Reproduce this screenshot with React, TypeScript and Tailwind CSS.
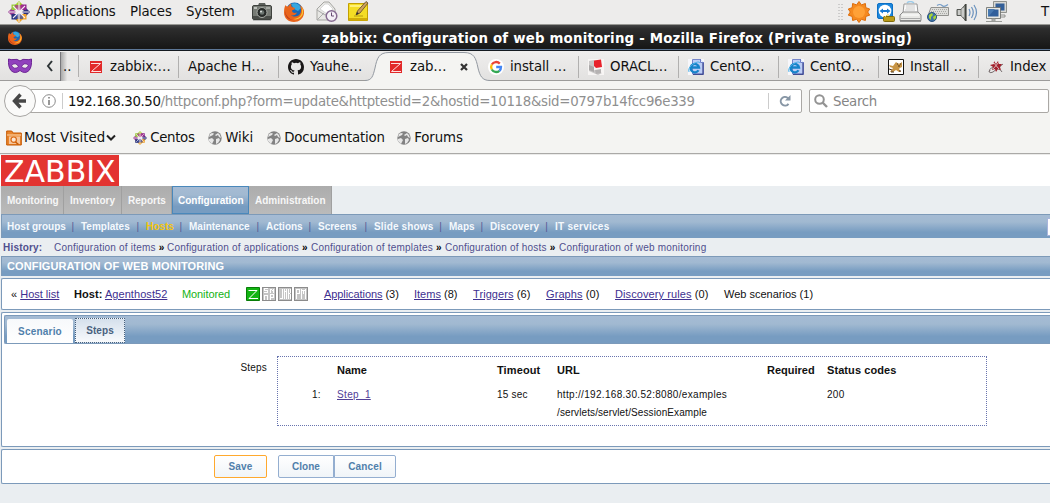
import React from "react";

type P = { className?: string };

const Centos = ({ className = "w-[22px] h-[22px]" }: P) => (
  <svg viewBox="0 0 22 22" className={className}>
    <path d="M11 0l4 4-4 4-4-4z" fill="#a6cf2e" />
    <path d="M11 14l4 4-4 4-4-4z" fill="#e9a127" />
    <path d="M0 11l4-4 4 4-4 4z" fill="#9c3f97" />
    <path d="M22 11l-4-4-4 4 4 4z" fill="#2d2f79" />
    <path d="M3.500 3.500H9v5.500H3.500z" fill="#9acb3c" />
    <path d="M13 3.500h5.500V9H13z" fill="#93268f" />
    <path d="M3.500 13H9v5.500H3.500z" fill="#28307b" />
    <path d="M13 13h5.500v5.500H13z" fill="#f0a22b" />
    <path d="M7 4h8v3l-4 4-4-4z" fill="#a8348f" opacity=".75" />
    <path d="M7 18h8v-3l-4-4-4 4z" fill="#394ca0" opacity=".75" />
    <path d="M5 5l12 12M17 5L5 17M1 11h20M11 1v20" stroke="#f5edf2" strokeWidth="1.100" fill="none" />
  </svg>
);

const Firefox = ({ className = "w-5 h-5" }: P) => (
  <svg viewBox="0 0 20 20" className={className}>
    <circle cx="10.500" cy="9" r="8.500" fill="#1768b5" />
    <path d="M7 2c4-2 9 0 10 4l-3 3-4-2z" fill="#36a7df" />
    <path d="M1.500 3C2 4 3 4.500 4 4.500 5 3 6 2 7.500 1.500 7 3 7 4 8 5l3 1c0 1.500-2 2-3 2.500 0 2 2 3 5 2-1 2.500-4 3.500-6 2.500 3 3 8 1.500 9.500-2 1-3 .5-6-1-8C19 5 20.500 8 20 11.500 19 17 15 20 10 20 4 20 0 16 0 10.500 0 7 .5 5 1.500 3z" fill="#e8641b" />
    <path d="M17 4c3 4 3 8 0 11-2 2-5 3-8 2 6 0 9-4 9-8 0-2 0-3-1-5z" fill="#fbc531" />
    <path d="M1 9c1 5 4 8 8 9-5 0-8-4-8-9z" fill="#b9311a" />
  </svg>
);

const Camera = () => (
  <svg viewBox="0 0 20 20" className="w-5 h-5">
    <path d="M6 3.500l1-2.500h6l1 2.500z" fill="#5c605b" />
    <rect x=".5" y="3.500" width="19" height="14" rx="1.500" fill="#777b75" stroke="#3e413d" />
    <path d="M1 14h18v3H1z" fill="#4a4d49" />
    <rect x="2" y="5" width="3" height="2" fill="#bfc2bd" />
    <rect x="14" y="5" width="4" height="2" fill="#a4a8a2" />
    <circle cx="10" cy="10.500" r="5" fill="#282b29" stroke="#a9ada7" />
    <circle cx="10" cy="10.500" r="2.300" fill="#6b7470" />
    <circle cx="9" cy="9.500" r="1" fill="#dde2df" />
    <path d="M1 18.500h18" stroke="#bbb" />
  </svg>
);

const MailClock = () => (
  <svg viewBox="0 0 22 22" className="w-[22px] h-[22px]">
    <path d="M1 8l7-7h5l6 7v11H1z" fill="#e8e8e5" stroke="#a6a6a2" />
    <path d="M4 8l5-5h3l5 5-6 5z" fill="#fff" stroke="#ccc" strokeWidth=".7" />
    <path d="M1 19l7-7M1 9l8 5 4-2" stroke="#aaa" fill="none" />
    <circle cx="15.500" cy="15" r="5.300" fill="#f4f0f6" stroke="#866b91" strokeWidth="1.500" />
    <path d="M15.500 11.500V15H18" stroke="#664b70" fill="none" />
  </svg>
);

const Note = () => (
  <svg viewBox="0 0 22 22" className="w-[22px] h-[22px]">
    <path d="M1.500 2.500h19v17h-19z" fill="#f4dd25" stroke="#c3a000" />
    <path d="M2 17h18v2.500H2z" fill="#d1ac0a" />
    <path d="M3 4h14v2H3z" fill="#fff178" />
    <path d="M9 14l1.500-4L19 .5l2 1.500-8 10z" fill="#cda25d" stroke="#59452b" strokeWidth=".8" />
    <path d="M9 14l1-3 2 1.500z" fill="#2b2b2b" />
    <path d="M7 15h9" stroke="#b69b10" />
  </svg>
);

const Sun = () => (
  <svg viewBox="0 0 22 22" className="w-[22px] h-[22px]">
    <path d="M11 0.500l2.400 3.400 4-1.400.4 4.200 3.900 1.300-2 3 2 3.200-3.900 1.200-.4 4.100-4-1.200L11 21.500l-2.400-3.200-4 1.200-.4-4.100-3.900-1.200 2-3.200-2-3 3.900-1.300.4-4.200 4 1.400z" fill="#f58a20" stroke="#dd6d0b" />
    <circle cx="11" cy="11" r="6" fill="#ffa137" />
  </svg>
);

const TeamViewer = () => (
  <svg viewBox="0 0 20 22" className="w-5 h-[22px]">
    <rect x="1.500" y="2.500" width="15" height="15" rx="1.500" fill="#1c87dd" stroke="#0b6fc4" />
    <circle cx="9" cy="10" r="6.300" fill="#fff" />
    <path d="M3.500 10l3.500-2.500V9h4V7.500l3.500 2.500-3.500 2.500V11H7v1.500z" fill="#1679d3" />
    <rect x="7.500" y="15.500" width="11" height="5" rx="1" fill="#b99b19" stroke="#806b0b" />
    <path d="M9 16l2-2h2" stroke="#e4cf62" fill="none" />
  </svg>
);

const Printer = () => (
  <svg viewBox="0 0 23 22" className="w-[23px] h-[22px]">
    <path d="M8 2q3-3 7 0" stroke="#9dcbe9" fill="none" strokeWidth="1.500" />
    <path d="M5 3h13l1 9H4z" fill="#fafafa" stroke="#999" />
    <path d="M7 5h9M7 7h9M6 9h10" stroke="#ccc" />
    <path d="M4 11L1 14v5.500h21V14l-3-3z" fill="#e8e8e5" stroke="#888" />
    <path d="M3 14h17" stroke="#fff" />
    <path d="M2 17.500h19" stroke="#aaa" />
    <path d="M1 20.500h21" stroke="#999" />
  </svg>
);

const Keyboard = () => (
  <svg viewBox="0 0 22 20" className="w-[22px] h-5">
    <path d="M10 3.500q3-2 5 0t6-1" stroke="#769dc7" strokeWidth="1.200" fill="none" />
    <path d="M4 5.500h17.500v8H1z" fill="#ddddda" stroke="#91918e" />
    <path d="M5 7.500h15M4 9.500h16M3 11.500h17" stroke="#a8a8a5" strokeDasharray="1 1" />
    <circle cx="5" cy="15" r="4.500" fill="#3f72a8" stroke="#29527e" />
    <path d="M2 13l3-2 1 2-2 2v3l-2-2zM6 15l3-2v3l-2 2z" fill="#a4d335" />
  </svg>
);

const Speaker = () => (
  <svg viewBox="0 0 22 20" className="w-[22px] h-5">
    <path d="M1 7.500h4l5-5.500v17l-5-5.500H1z" fill="#a6a8a3" stroke="#555753" />
    <path d="M3 8v5M7 6v9" stroke="#eee" />
    <path d="M9.500 2v17" stroke="#42443f" strokeWidth="1.500" />
    <path d="M13 7q2 3.500 0 7M15.500 5q3.500 5.500 0 11M18 3q5 7.500 0 15" stroke="#6991bd" strokeWidth="1.200" fill="none" />
  </svg>
);

const Screens = () => (
  <svg viewBox="0 0 22 22" className="w-[22px] h-[22px]">
    <path d="M9.500 1.500h11v9h-11z" fill="#335f98" stroke="#d8d8d4" strokeWidth="2" />
    <path d="M8.500.5h13v11h-13zM11 14h9v2h-9z" fill="none" stroke="#7b7d79" strokeWidth=".8" />
    <path d="M2.500 7.500h12v9h-12z" fill="#315f9b" stroke="#e7e7e3" strokeWidth="2" />
    <path d="M1.500 6.500h14v11h-14z" fill="none" stroke="#666865" strokeWidth=".8" />
    <path d="M3 16l7-8h-7z" fill="#4778b0" />
    <path d="M7 18h3v2H7zM1 20.500h16" stroke="#999b97" fill="#bbb" />
  </svg>
);

const Mask = () => (
  <svg viewBox="0 0 24 16" className="w-6 h-4">
    <path d="M.5 1Q3 2 6 1.500 9 .5 12 3q3-2.500 6-1.500 3 .5 5.500-.5Q24 9 21 12.500 17 16.500 12 12.500 7 16.500 3 12.500 0 9 .5 1z" fill="#9141bd" stroke="#6c2494" />
    <path d="M3.500 7.500q4-4 7 1-4 4-7-1zM20.500 7.500q-4-4-7 1 4 4 7-1z" fill="#eeeceb" stroke="#64208a" strokeWidth=".8" />
  </svg>
);

const ZTab = () => (
  <svg viewBox="0 0 16 16" className="w-4 h-4">
    <rect x="2" y="2" width="12" height="12" fill="#e22a2a" />
    <path d="M3 4.500h9.500L3.500 12.500H13" stroke="#ffe1e1" fill="none" />
  </svg>
);

const Github = () => (
  <svg viewBox="0 0 16 16" className="w-4 h-4">
    <path d="M8 0C3.580 0 0 3.580 0 8c0 3.540 2.290 6.530 5.470 7.590.4.070.55-.17.55-.38 0-.19-.01-.82-.01-1.490-2.010.37-2.530-.49-2.690-.94-.09-.23-.48-.94-.82-1.130-.28-.15-.68-.52-.01-.53.63-.01 1.080.58 1.230.82.72 1.210 1.870.87 2.330.66.07-.52.28-.87.51-1.070-1.780-.2-3.640-.89-3.640-3.950 0-.87.31-1.590.82-2.150-.08-.2-.36-1.020.08-2.120 0 0 .67-.21 2.200.82a7.600 7.600 0 0 1 4 0c1.530-1.040 2.200-.82 2.200-.82.44 1.100.16 1.920.08 2.120.51.56.82 1.270.82 2.150 0 3.070-1.870 3.750-3.650 3.950.29.25.54.73.54 1.480 0 1.070-.01 1.930-.01 2.200 0 .21.15.46.55.38A8 8 0 0 0 16 8c0-4.420-3.580-8-8-8z" fill="#191717" />
  </svg>
);

const Google = () => (
  <svg viewBox="0 0 16 16" className="w-4 h-4">
    <circle cx="8" cy="8" r="8" fill="#fff" />
    <g fill="none" strokeWidth="2.300">
      <path d="M11.800 4.600A5 5 0 0 0 3.800 5.500" stroke="#ea4335" />
      <path d="M3.800 5.500a5 5 0 0 0 0 5" stroke="#fbbc05" />
      <path d="M3.800 10.500a5 5 0 0 0 7.600 1.300" stroke="#34a853" />
      <path d="M11.400 11.800A5 5 0 0 0 13 8H8.200" stroke="#4285f4" />
    </g>
  </svg>
);

const Oracle = () => (
  <svg viewBox="0 0 16 16" className="w-4 h-4">
    <path d="M0 0h16v16H0z" fill="#f7f5f4" />
    <path d="M1 2l5-1v10l8 3-4 2-9-4z" fill="#c9c7c7" />
    <path d="M1 6l5 2v5l-5-2z" fill="#aaa8a8" />
    <path d="M6 1.500l7-1 1 7.500-6 1-2-2z" fill="#e8222b" />
    <path d="M7 11l6-1v4l-5 1z" fill="#b5b2b2" />
  </svg>
);

const Explorer = () => (
  <svg viewBox="0 0 16 16" className="w-4 h-4">
    <path d="M0 0h16v16H0z" fill="#f7f7fb" />
    <path d="M4.500.5h8l3 3V15h-11z" fill="#bccdf6" stroke="#7585c9" />
    <path d="M15 4v11.500H5" stroke="#414b91" fill="none" strokeWidth="1.300" />
    <path d="M12.500 0v3.500H16" fill="#e8efff" stroke="#6c7ec6" />
    <path d="M10.500 11.200A4.200 4.200 0 1 1 11 8.500H3.500" fill="none" stroke="#1683c9" strokeWidth="2.300" />
    <path d="M1 13Q-.5 9 5 5q6-3.500 7-1" fill="none" stroke="#4eb2e8" />
  </svg>
);

const Tomcat = () => (
  <svg viewBox="0 0 16 16" className="w-4 h-4">
    <path d="M.5.5h15v15H.5z" fill="#fff" stroke="#111" />
    <path d="M8 3l2 1.500 2 .1L14 3v5l-2 1-1 1 2 3h-2l-3-2-3 2H2l3-4-3-1-1-2 4 1z" fill="#c89545" />
    <path d="M9 5h1M12 5h1M10 7h2M1 10l3 1M3 13h3M11 12h2" stroke="#4c321a" />
  </svg>
);

const Jetty = () => (
  <svg viewBox="0 0 16 16" className="w-4 h-4">
    <path d="M2 11Q0 15 5 13L15 5M1 13Q2 7 8 9T14 13" fill="none" stroke="#796f70" />
    <path d="M6 2l2 3 2-3 1 3h3l-2 3 1 3-3-1-2 3-1-3-3 1 1-3-3-2 4-1z" fill="#a3202c" />
    <path d="M5 3l6 7M11 3L5 10" stroke="#d9b8ba" />
  </svg>
);

const MostVisited = () => (
  <svg viewBox="0 0 16 16" className="w-4 h-4 shrink-0">
    <path d="M.7 1h5l1.500 2h8.100v12H.7z" fill="#e9852d" stroke="#c65800" />
    <path d="M1 5h14" stroke="#fbd8b0" />
    <rect x="3" y="6.500" width="11" height="7.500" fill="#f6c59a" />
    <circle cx="7.700" cy="9.700" r="2.700" fill="#fce6d3" stroke="#d96912" strokeWidth="1.200" />
    <path d="M9.500 12l3 2.500" stroke="#c95900" strokeWidth="1.500" />
  </svg>
);

const Globe = () => (
  <svg viewBox="0 0 14 14" className="w-3.5 h-3.5 shrink-0">
    <circle cx="7" cy="7" r="6.700" fill="#828282" />
    <path d="M2 3l2-1 2 .5L5 4 3 5 1 6zM7 4l3-2 2 2 1 3-2-1-1-2-2 1zM1 8l3-1 2 2-1 2-1 2-3-3zM8 8l3-1 1 2-2 3-2 1z" fill="#e7e7e7" />
  </svg>
);

type TabProps = { icon?: React.ReactNode; text: string; active?: boolean; divider?: boolean };
const Tab = ({ icon, text, active, divider = true }: TabProps) => (
  <div className="relative flex h-[30px] w-[100px] shrink-0 items-center pl-[9px]">
    {active && (
      <svg viewBox="0 0 126 30" className="absolute left-[-14px] top-0 h-[30px] w-[126px]">
        <path d="M0 29.500C7 29.500 8 25 10 17 12 7 14 1.500 24 1.500H99C109 1.500 111 7 113 17 115 25 117 29.500 125 29.500V30H0z" fill="#f4f4f2" />
        <path d="M0 29.500C7 29.500 8 25 10 17 12 7 14 1.500 24 1.500H99C109 1.500 111 7 113 17 115 25 117 29.500 125 29.500" fill="none" stroke="#9399a1" />
      </svg>
    )}
    {icon && <span className="relative mr-1.5 flex w-4 items-center pt-px">{icon}</span>}
    <span className="relative pt-0.5 tracking-[-0.1px]">{text}</span>
    {active && (
      <svg viewBox="0 0 8 8" className="absolute left-[81px] top-3 h-2 w-2">
        <path d="M1 1l6 6M7 1L1 7" stroke="#333" strokeWidth="2.200" />
      </svg>
    )}
    {divider && <span className="absolute right-0 top-[5px] h-[22px] w-px bg-[#b1b0af]" />}
  </div>
);

const Bar = "bg-linear-to-b from-[#a5bbd4] via-[#a1b9d1] via-30% to-[#779cc1] to-75%";

const mainMenu = [
  { t: "Monitoring", c: "w-[63px]" },
  { t: "Inventory", c: "w-[58px]" },
  { t: "Reports", c: "w-[50px]" },
];
const subMenu = [
  { t: "Host groups", c: "w-[74px]" },
  { t: "Templates", c: "w-[65px]" },
  { t: "Hosts", c: "w-[43px] text-[#f5c60a]" },
  { t: "Maintenance", c: "w-[77px]" },
  { t: "Actions", c: "w-[52px]" },
  { t: "Screens", c: "w-[56px]" },
  { t: "Slide shows", c: "w-[75px] tracking-[0.15px]" },
  { t: "Maps", c: "w-[41px]" },
  { t: "Discovery", c: "w-[65px] tracking-[0.15px]" },
  { t: "IT services", c: "w-[80px] tracking-[0.25px]" },
];
const history = [
  { t: "items", c: "w-[113px]" },
  { t: "applications", c: "w-[144px]" },
  { t: "templates", c: "w-[134px]" },
  { t: "hosts", c: "w-[114px]" },
  { t: "web monitoring", c: "w-[160px]" },
];
const links = [
  { t: "Applications", n: 3, c: "w-[90px] tracking-[-0.07px]" },
  { t: "Items", n: 8, c: "w-[59px]" },
  { t: "Triggers", n: 6, c: "w-[73px] tracking-[0.08px]" },
  { t: "Graphs", n: 0, c: "w-[69px] tracking-[0.08px]" },
  { t: "Discovery rules", n: 0, c: "w-[109px] tracking-[0.1px]" },
];

const Badge = ({ d }: { d: string }) => (
  <svg viewBox="0 0 14 14" className="h-3.5 w-3.5" shapeRendering="crispEdges">
    <path d="M.5.5h13v13H.5z" fill="#c5c5c5" stroke="#8c8c8c" />
    <path d={d} fill="none" stroke="#fff" />
  </svg>
);

export default function App() {
  return (
    <div className="flex h-[503px] w-[1050px] flex-col overflow-hidden whitespace-nowrap bg-[#eaeef1] font-['DejaVu_Sans',sans-serif] text-[13.33px] leading-4 text-[#111]">
      <div className="flex h-6 shrink-0 items-center bg-[#edeceb] pl-2">
        <Centos />
        <span className="ml-1.5 w-[94px] tracking-[-0.15px]">Applications</span>
        <span className="w-14 tracking-[-0.1px]">Places</span>
        <span className="w-[66px] tracking-[-0.2px]">System</span>
        <span className="w-8"><Camera /></span>
        <span className="w-8"><Firefox /></span>
        <span className="w-[31px]"><MailClock /></span>
        <Note />
        <svg viewBox="0 0 6 18" className="ml-[469px] h-[18px] w-1.5">
          <path d="M1 1v17M4 1v17" stroke="#aaa" strokeDasharray="1 2" />
        </svg>
        <span className="ml-1 w-7"><Sun /></span>
        <span className="w-[23px]"><TeamViewer /></span>
        <span className="w-7"><Printer /></span>
        <span className="w-[29px]"><Keyboard /></span>
        <span className="w-[29px]"><Speaker /></span>
        <span className="w-[56px]"><Screens /></span>
        <span>T</span>
      </div>

      <div className="flex h-[27px] shrink-0 items-center border-b border-t border-b-[#151a20] border-t-[#989894] bg-linear-to-b from-[#444] via-[#2d2d2d] via-15% to-[#181818] to-90% pl-2 shadow-[inset_0_-1px_0_#5d7797]">
        <Firefox className="h-3.5 w-3.5" />
        <span className="ml-[300px] pt-0.5 font-bold tracking-[0.2px] text-white">zabbix: Configuration of web monitoring - Mozilla Firefox (Private Browsing)</span>
      </div>

      <div className="flex h-[30px] shrink-0 items-center bg-linear-to-b from-[#efeeed] to-[#e2e1e0] shadow-[inset_0_-1px_0_#9c9b9a]">
        <span className="ml-2 w-[38px] shrink-0"><Mask /></span>
        <svg viewBox="0 0 8 12" className="h-3 w-2 shrink-0"><path d="M6 1L2 6l4 5" fill="none" stroke="#2e3436" strokeWidth="2" /></svg>
        <span className="ml-1.5 flex h-[29px] w-[19px] shrink-0 items-center border-l border-[#77777b] bg-linear-to-r from-[#aaa] via-[#e9e8e7] via-35% to-[#e9e8e7] pl-0.5 pt-0.5">..</span>
        <span className="-ml-px h-[22px] w-px shrink-0 bg-[#b1b0af]" />
        <Tab icon={<ZTab />} text="zabbix:…" />
        <Tab text="Apache H…" />
        <Tab icon={<Github />} text="Yauhe…" divider={false} />
        <Tab icon={<ZTab />} text="zab…" active divider={false} />
        <Tab icon={<Google />} text="install …" />
        <Tab icon={<Oracle />} text="ORACL…" />
        <Tab icon={<Explorer />} text="CentO…" />
        <Tab icon={<Explorer />} text="CentO…" />
        <Tab icon={<Tomcat />} text="Install …" />
        <Tab icon={<Jetty />} text="Index" divider={false} />
      </div>

      <div className="flex h-10 shrink-0 items-center bg-[#f4f4f2]">
        <svg viewBox="0 0 34 34" className="z-10 ml-[3px] h-[34px] w-[34px] shrink-0">
          <circle cx="17" cy="17" r="15.500" fill="#fafaf9" stroke="#a7a5a3" />
          <path d="M23 17H12M17.500 10.500L11.500 17l6 6.500" fill="none" stroke="#474747" strokeWidth="3.400" />
        </svg>
        <div className="-ml-3 flex h-6 w-[777px] shrink-0 items-center rounded-r-[2px] border border-[#aaa8a5] bg-white pl-4">
          <svg viewBox="0 0 14 14" className="h-3.5 w-3.5 shrink-0">
            <circle cx="7" cy="7" r="6.300" fill="none" stroke="#8a8a8a" />
            <path d="M7 6v5M7 3v1.600" stroke="#777" strokeWidth="1.500" />
          </svg>
          <span className="ml-1.5 mr-[5px] h-4 w-px shrink-0 bg-[#ccc]" />
          <span className="w-[700px] shrink-0 pt-px tracking-[-0.295px] text-[#8f8f8f]"><span className="tracking-[-0.38px] text-[#111]">192.168.30.50</span>/httpconf.php?form=update&amp;httptestid=2&amp;hostid=10118&amp;sid=0797b14fcc96e339</span>
          <span className="h-4 w-px shrink-0 bg-[#ccc]" />
          <svg viewBox="0 0 12 12" className="ml-2.5 h-3 w-3 shrink-0">
            <path d="M9.500 8.800A4.300 4.300 0 1 1 8.500 2.700L10 4.500" fill="none" stroke="#8796a5" strokeWidth="2" />
            <path d="M11.500 0v5.500H6z" fill="#8796a5" />
          </svg>
        </div>
        <div className="ml-[7px] flex h-6 w-60 items-center rounded-[2px] border border-[#aaa8a5] bg-white pl-1">
          <svg viewBox="0 0 14 14" className="h-3.5 w-3.5"><circle cx="5.500" cy="5.500" r="4.300" fill="none" stroke="#939393" strokeWidth="2" /><path d="M8.500 8.500l4.500 4.500" stroke="#939393" strokeWidth="2.400" /></svg>
          <span className="ml-[5px] pt-px tracking-[-0.3px] text-[#858585]">Search</span>
        </div>
      </div>

      <div className="flex h-8 shrink-0 items-center bg-[#f4f4f2] pl-1.5 pt-px">
        <MostVisited />
        <span className="ml-0.5">Most Visited</span>
        <svg viewBox="0 0 10 8" className="ml-px mr-[17px] h-2 w-2.5"><path d="M1 1.500l4 4 4-4" fill="none" stroke="#222" strokeWidth="2" /></svg>
        <Centos className="h-3.5 w-3.5" />
        <span className="ml-[3px] w-[58px] tracking-[-0.3px]">Centos</span>
        <Globe /><span className="ml-[3px] w-[42px]">Wiki</span>
        <Globe /><span className="ml-[3px] w-[113px] tracking-[-0.15px]">Documentation</span>
        <Globe /><span className="ml-[3px] tracking-[-0.1px]">Forums</span>
      </div>
      <div className="h-0.5 shrink-0 border-t border-[#aaa9a7] bg-[#ebebea]" />

      <div className="flex grow flex-col font-['Liberation_Sans',sans-serif] text-[10px]">
        <div className="flex h-[31px] shrink-0 bg-white pl-px">
          <div className="h-[31px] w-[118px] bg-[#e33431] pl-[3px] font-['DejaVu_Sans',sans-serif] text-[30px] leading-[33px] text-white">ZABBIX</div>
        </div>
        <div className="flex h-7 shrink-0 pl-px font-bold leading-[29px] text-[#f7f7f7]">
          {mainMenu.map((m) => (
            <span key={m.t} className={`${m.c} border-r border-[#a0a0a0] bg-linear-to-b from-[#acacac] to-[#bababa] pl-1.5`}>{m.t}</span>
          ))}
          <span className={`${Bar} w-[77px] border border-[#4a88bb] pl-[5px] leading-[27px] text-white`}>Configuration</span>
          <span className="w-[83px] border-r border-[#a0a0a0] bg-linear-to-b from-[#acacac] to-[#bababa] pl-1.5">Administration</span>
        </div>

        <div className={`${Bar} ml-px flex h-6 shrink-0 items-center border-l border-t border-[#7d9ab8] pl-[5px] font-bold text-[#f5f9fd]`}>
          {subMenu.map((m, i) => (
            <span key={m.t} className={`${m.c} flex shrink-0 justify-between`}>
              {m.t}
              {i < subMenu.length - 1 && <span className="mr-[7px] font-normal text-[#595994]">|</span>}
            </span>
          ))}
          <span className="ml-auto h-[18px] w-[3px] border border-r-0 border-[#a8b5dc] bg-white" />
        </div>

        <div className="flex h-[18px] shrink-0 items-center pl-[3px] pt-px tracking-[0.2px] text-[#504e8e]">
          <span className="w-[51px] font-bold">History:</span>
          {history.map((h, i) => (
            <span key={h.t} className={h.c}>
              Configuration of {h.t}
              {i < history.length - 1 && <b className="text-black"> »</b>}
            </span>
          ))}
        </div>
        <div className={`${Bar} ml-px h-5 shrink-0 border-l border-t border-[#7d9ab8] pl-[5px] text-[11px] font-bold leading-[19px] tracking-[0.12px] text-white`}>CONFIGURATION OF WEB MONITORING</div>

        <div className="ml-px mt-0.5 flex h-8 shrink-0 items-center rounded-l-[2px] border border-r-0 border-[#7c9aba] bg-white pl-[9px] text-[11px] text-[#111]">
          <span className="w-[63px]">« <a className="text-[#403090] underline">Host list</a></span>
          <span className="w-[108px] tracking-[0.06px]"><b>Host:</b> <a className="text-[#403090] underline">Agenthost52</a></span>
          <span className="w-16 tracking-[-0.1px] text-[#14b314]">Monitored</span>
          <span className="flex w-[78px] gap-0.5">
            <svg viewBox="0 0 14 14" className="h-3.5 w-3.5"><path d="M.5.5h13v13H.5z" fill="#12b412" stroke="#087d08" /><path d="M2.500 3.500h8.500L3 11.500h9" fill="none" stroke="#fff" /></svg>
            <Badge d="M6 1.500H2.500v2H5.500v2H2M8.500 6V1.500M9 2.500h1M10 3.500h1M11.500 6V1.500M2.500 12.500V7.500M3 8.500h2M5.500 12.500V7.500M8.500 12.500V7.500h3v2.500h-3" />
            <Badge d="M4.500 2v9.500h-3M6.500 12V2M7 4.500h1M8.500 2v10M10.500 2v10M11 6.500h1M12.500 2v4M12.500 7v5" />
            <Badge d="M2.500 12V2.500h3v4h-3M7.500 12V2M8 3.500h1M9.500 3v4M10 3.500h1M11.500 2v10" />
          </span>
          {links.map((l) => (
            <span key={l.t} className={l.c}><a className="text-[#403090] underline">{l.t}</a> ({l.n})</span>
          ))}
          <span>Web scenarios (1)</span>
        </div>

        <div className="ml-px mt-0.5 h-[135px] shrink-0 rounded-l-[2px] border border-r-0 border-[#7c9aba] bg-white pl-0.5 pt-0.5">
          <div className={`${Bar} flex h-[29px] items-end gap-0.5 rounded-l-[2px] border border-r-0 border-[#7c9aba] pl-0.5 font-bold`}>
            <span className="h-6 w-[66px] rounded-t-[2px] bg-linear-to-b from-[#f7f9fb] to-white text-center leading-[25px] tracking-[0.2px] text-[#507fab]">Scenario</span>
            <span className="h-[25px] w-[50px] border border-dotted border-[#47607c] bg-linear-to-b from-[#d5e0ec] to-[#f8fafc] text-center leading-[24px] tracking-[0.1px] text-[#48617e]">Steps</span>
          </div>
          <div className="mt-3 flex text-[#111]">
            <span className="w-[263px] pt-1 text-right tracking-[0.2px]">Steps</span>
            <div className="ml-2.5 grid h-[70px] w-[710px] grid-cols-[25px_160px_60px_210px_60px_1fr] grid-rows-[18px_1fr] border border-dotted border-[#6874ae] pl-[34px] pt-1 leading-[18px]">
              <span /><b className="text-[11px]">Name</b><b className="text-[11px] tracking-[0.1px]">Timeout</b><b className="text-[11px]">URL</b><b className="text-[11px]">Required</b><b className="text-[11px] tracking-[0.08px]">Status codes</b>
              <span className="pt-[7px] tracking-[0.3px]">1:</span>
              <a className="pt-[7px] tracking-[0.35px] text-[#524097] underline">Step_1</a>
              <span className="pt-[7px] tracking-[0.2px]">15 sec</span>
              <span className="pt-[7px] tracking-[0.31px]">http://192.168.30.52:8080/examples<br /><span className="tracking-[0.1px]">/servlets/servlet/SessionExample</span></span>
              <span />
              <span className="pt-[7px] tracking-[0.3px]">200</span>
            </div>
          </div>
        </div>

        <div className="ml-px mt-0.5 flex h-[35px] shrink-0 items-center rounded-l-[2px] border border-r-0 border-[#7c9aba] bg-white pl-[212px] font-bold text-[#507fab]">
          <button className="mr-[11px] h-[23px] w-[53px] rounded-[2px] border border-[#ffa92e] bg-linear-to-b from-white to-[#f0f4f8] tracking-[0.2px]">Save</button>
          <button className="h-[23px] w-14 rounded-l-[2px] border border-[#94aed0] bg-linear-to-b from-white to-[#f0f4f8]">Clone</button>
          <button className="h-[23px] w-[62px] rounded-r-[2px] border border-[#94aed0] bg-linear-to-b from-white to-[#f0f4f8] tracking-[0.15px]">Cancel</button>
        </div>
      </div>
    </div>
  );
}
